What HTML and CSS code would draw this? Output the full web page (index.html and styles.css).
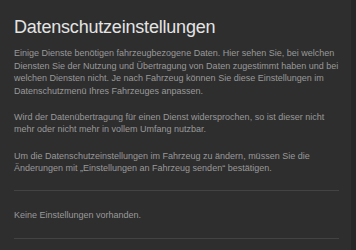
FILE: index.html
```html
<!DOCTYPE html>
<html lang="de">
<head>
    <meta charset="UTF-8">
    <meta name="viewport" content="width=device-width, initial-scale=1.0">
    <title>Datenschutzeinstellungen</title>
    <link rel="stylesheet" href="styles.css">
</head>
<body>
    <div class="page">
        <div class="content">
            <h1>Datenschutzeinstellungen</h1>
            <p>Einige Dienste benötigen fahrzeugbezogene Daten. Hier sehen Sie, bei welchen Diensten Sie der Nutzung und Übertragung von Daten zugestimmt haben und bei welchen Diensten nicht. Je nach Fahrzeug können Sie diese Einstellungen im Datenschutzmenü Ihres Fahrzeuges anpassen.</p>
            <p>Wird der Datenübertragung für einen Dienst widersprochen, so ist dieser nicht mehr oder nicht mehr in vollem Umfang nutzbar.</p>
            <p>Um die Datenschutzeinstellungen im Fahrzeug zu ändern, müssen Sie die Änderungen mit „Einstellungen an Fahrzeug senden“ bestätigen.</p>
            <div class="settings">
                <p class="empty">Keine Einstellungen vorhanden.</p>
            </div>
        </div>
        <div class="scrollbar"></div>
    </div>
</body>
</html>
```

FILE: styles.css
```css
html, body {
    margin: 0;
    height: 100%;
    background-color: #2e2e2e;
}
body {
    font-family: "Liberation Sans", Arial, sans-serif;
    overflow: hidden;
}
.page {
    display: flex;
    height: 250px;
}
.content {
    flex: 1;
    padding: 16px 12px 0 14px;
}
.scrollbar {
    width: 5px;
    background-color: #262626;
}
h1 {
    margin: 0 0 9px 0;
    font-size: 18px;
    font-weight: normal;
    letter-spacing: -0.2px;
    color: #e4e4e4;
    line-height: 22px;
}
p {
    margin: 0 0 13.5px 0;
    font-size: 9px;
    line-height: 12.6px;
    color: #999999;
}
.settings {
    margin-top: 15px;
    border-top: 1px solid #434343;
    border-bottom: 1px solid #434343;
    padding: 18px 0 17px 0;
}
.settings .empty {
    margin: 0;
}
```
